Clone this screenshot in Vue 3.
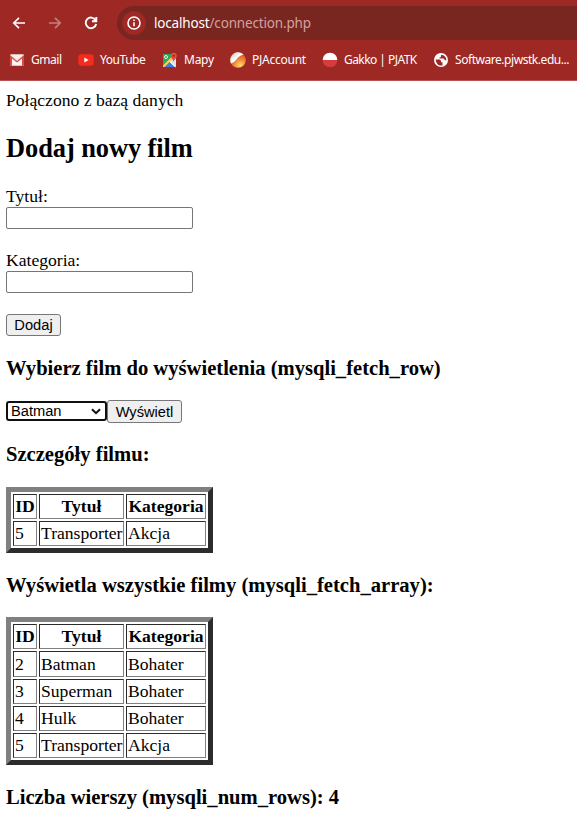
<script setup>
import { ref } from 'vue'

const selected = ref('Batman')
const title = ref('')
const category = ref('')
const films = [
  { id: 2, title: 'Batman', category: 'Bohater' },
  { id: 3, title: 'Superman', category: 'Bohater' },
  { id: 4, title: 'Hulk', category: 'Bohater' },
  { id: 5, title: 'Transporter', category: 'Akcja' }
]
const details = films.filter((f) => f.id === 5)
</script>

<template>
  <div class="window">
    <header class="chrome">
      <div class="toolbar">
        <svg class="nav" viewBox="0 0 16 16"><path d="M14 8H3M8 2.8 2.8 8 8 13.2" /></svg>
        <svg class="nav forward" viewBox="0 0 16 16"><path d="M2 8h11M8 2.8 13.2 8 8 13.2" /></svg>
        <svg class="nav reload" viewBox="0 0 16 16"><path d="M12.6 5.2A5.3 5.3 0 1 0 13.2 9M13.3 2v4.2H9" /></svg>
        <div class="address">
          <span class="info">
            <svg viewBox="0 0 14 14"><circle cx="7" cy="7" r="6" /><path d="M7 6.3v4M7 3.6v1.5" /></svg>
          </span>
          <span class="url"><b>localhost</b>/connection.php</span>
        </div>
      </div>
      <nav class="bookmarks">
        <a class="mark gmail">
          <svg viewBox="0 0 16 16">
            <path d="M1 2.500h14v11H1z" fill="#e8e5e3" />
            <path d="M3 13.500V6l5 4 5-4v7.500z" fill="#f8f7f6" />
            <path d="M1 13.500V3L8 9l7-6v10.500h-2V6.500L8 10.500 3 6.500v7z" fill="#dc4a40" />
            <path d="M2 2.500h12L8 7.700z" fill="#f3f1ee" />
          </svg>
          <span>Gmail</span>
        </a>
        <a class="mark youtube">
          <svg viewBox="0 0 16 16"><rect x=".3" y="2.300" width="15.400" height="11.400" rx="3" fill="#f52b1c" /><path d="M6.300 5.400v5.200L10.700 8z" fill="#fff" /></svg>
          <span>YouTube</span>
        </a>
        <a class="mark maps">
          <svg viewBox="0 0 16 16">
            <rect x="1" y="2" width="13" height="13" rx="1" fill="#dce5e8" />
            <path d="M1 2h9v3L1 14z" fill="#37a55b" />
            <path d="M2 15l5.500-5.500L13 15z" fill="#3f7ee8" />
            <path d="M1 13.500 11 3.500l1.500 1.500L2.500 15H1z" fill="#f7cd47" />
            <path d="M7.500 9.500 13.500 15" stroke="#fff" stroke-width="1" />
            <circle cx="4" cy="5" r="1.500" fill="none" stroke="#e5f4e8" />
            <path d="M11.700 10C11.300 7.500 8.800 6.500 8.800 3.800a3 3 0 0 1 6 0c0 2.700-2.700 3.700-3.100 6.200z" fill="#e34b3d" />
            <circle cx="11.800" cy="3.800" r="1" fill="#892b23" />
          </svg>
          <span>Mapy</span>
        </a>
        <a class="mark account">
          <svg viewBox="0 0 16 16">
            <defs>
              <radialGradient id="orb" cx=".65" cy=".85" r=".7"><stop offset="0" stop-color="#ffe16b" /><stop offset=".5" stop-color="#f3903c" /><stop offset="1" stop-color="#d85a25" /></radialGradient>
              <linearGradient id="shine" x2="1" y2="1"><stop stop-color="#b9c5c8" /><stop offset=".5" stop-color="#fff" /></linearGradient>
            </defs>
            <circle cx="8" cy="8" r="7.800" fill="url(#orb)" />
            <path d="M1 11.400A7.800 7.800 0 0 1 13.500 2.500Q8 4 6 8q-2 2.500-5 3.400z" fill="url(#shine)" />
          </svg>
          <span>PJAccount</span>
        </a>
        <a class="mark gakko">
          <svg viewBox="0 0 16 16"><circle cx="8" cy="8" r="7.300" fill="#d63b3d" /><path d="M.7 8a7.300 7.300 0 0 1 14.600 0z" fill="#fff" /></svg>
          <span>Gakko | PJATK</span>
        </a>
        <a class="mark software">
          <svg viewBox="0 0 16 16">
            <circle cx="8" cy="8" r="7" fill="#fff" />
            <path d="M2.700 7.500h3.600q1.700 0 1.700 1.700v1h1.500v3.200c-3.400 1-6.500-1.500-6.800-5.900zM8 2.700v1.700q0 1-1.500 1v1.200h4q1.100 0 1.100 1.700h1.800C13.300 5 11.500 2.900 8 2.700z" fill="#9d2824" />
          </svg>
          <span>Software.pjwstk.edu...</span>
        </a>
      </nav>
    </header>

    <main class="page">
      <p class="status">Połączono z bazą danych</p>
      <h2>Dodaj nowy film</h2>
      <form @submit.prevent>
        <label for="title">Tytuł:</label>
        <input id="title" v-model="title" type="text" />
        <label for="category" class="second">Kategoria:</label>
        <input id="category" v-model="category" type="text" />
        <button class="add">Dodaj</button>
      </form>
      <h3 class="choose">Wybierz film do wyświetlenia (mysqli_fetch_row)</h3>
      <form class="picker" @submit.prevent>
        <div class="select">
          <select v-model="selected">
            <option v-for="film in films" :key="film.id">{{ film.title }}</option>
          </select>
          <svg viewBox="0 0 10 7"><path d="M1 1.200 5 5.200 9 1.200" /></svg>
        </div>
        <button class="show">Wyświetl</button>
      </form>
      <h3 class="detail">Szczegóły filmu:</h3>
      <table class="one">
        <thead><tr><th class="id">ID</th><th class="name">Tytuł</th><th class="kind">Kategoria</th></tr></thead>
        <tbody><tr v-for="film in details" :key="film.id"><td>{{ film.id }}</td><td>{{ film.title }}</td><td>{{ film.category }}</td></tr></tbody>
      </table>
      <h3 class="all">Wyświetla wszystkie filmy (mysqli_fetch_array):</h3>
      <table class="many">
        <thead><tr><th class="id">ID</th><th class="name">Tytuł</th><th class="kind">Kategoria</th></tr></thead>
        <tbody><tr v-for="film in films" :key="film.id"><td>{{ film.id }}</td><td>{{ film.title }}</td><td>{{ film.category }}</td></tr></tbody>
      </table>
      <h3 class="count">Liczba wierszy (mysqli_num_rows): {{ films.length }}</h3>
    </main>
  </div>
</template>

<style>
body { margin: 0; background: #fff; }
</style>

<style scoped>
* { box-sizing: border-box; }
.window { width: 577px; height: 838px; overflow: hidden; background: #fff; }
.chrome { height: 81px; background: #9d2824; border-bottom: 1px solid #b3524e; color: #fff; font-family: "Noto Sans", sans-serif; }
.toolbar { display: flex; align-items: center; height: 46px; padding-left: 11px; }
.nav { width: 16px; height: 16px; margin-right: 20px; flex: none; fill: none; stroke: #fff; stroke-width: 1.7; }
.forward { opacity: .4; }
.reload { margin-right: 18px; stroke-width: 1.9; }
.address { display: flex; align-items: center; flex: 1; height: 34px; padding-left: 5px; background: #792520; border-radius: 17px 0 0 17px; }
.info { display: flex; align-items: center; justify-content: center; width: 24px; height: 24px; border-radius: 50%; background: #9d2824; }
.info svg { width: 14px; height: 14px; fill: none; stroke: #fff; stroke-width: 1.6; }
.url { margin-left: 8px; font-size: 13.5px; line-height: 20px; letter-spacing: -.17px; color: #d3a19e; white-space: nowrap; }
.url b { font-weight: 400; color: #fff; }
.bookmarks { display: flex; height: 28px; padding-left: 9px; }
.mark { display: flex; align-items: center; flex: none; gap: 6px; font-size: 12px; line-height: 16px; letter-spacing: -.45px; white-space: nowrap; }
.mark svg { width: 16px; height: 16px; flex: none; }
.gmail { width: 69px; }
.youtube { width: 84px; }
.maps { width: 68px; letter-spacing: -.25px; }
.account { width: 92px; letter-spacing: -.25px; }
.gakko { width: 111px; letter-spacing: -.55px; }
.page { padding: 9px 6px 0; font: 17.6px/20px "Liberation Serif", serif; color: #000; }
.status { margin: 0; }
h2 { margin: 23px 0; font-size: 26.4px; line-height: 30px; letter-spacing: -.06px; }
h3 { margin: 0; font-size: 20.6px; line-height: 24px; white-space: nowrap; }
label { display: block; height: 21px; }
.second { margin-top: 21px; }
input { display: block; width: 187px; height: 22px; margin: 0; padding: 1px 2px; border: 1px solid #767676; border-radius: 2px; background: #fff; font: 14.667px "Liberation Sans", sans-serif; }
button { display: block; margin: 0; padding: 0; border: 1px solid #767676; border-radius: 3px; background: #efefef; color: #000; font: 14.667px/18px "Liberation Sans", sans-serif; }
.add { width: 55px; height: 22px; margin-top: 21px; }
.choose { margin-top: 20px; }
.picker { display: flex; height: 23px; margin-top: 20px; }
.select { display: grid; align-items: center; width: 101px; height: 20px; margin-top: 1px; }
.select > * { grid-area: 1 / 1; }
select { appearance: none; width: 101px; height: 20px; margin: 0; padding: 0 0 0 3px; border: 2px solid #101010; border-radius: 3px; outline: none; background: #fff; color: #000; font: 14.667px/16px "Liberation Sans", sans-serif; }
.select svg { width: 10px; height: 7px; justify-self: end; margin-right: 6px; fill: none; stroke: #101010; stroke-width: 2; pointer-events: none; }
.show { width: 75px; height: 23px; }
.detail { margin-top: 19px; }
table { width: 207px; table-layout: fixed; border: 5px solid; border-color: #808080 #2c2c2c #2c2c2c #808080; border-collapse: separate; border-spacing: 2px; }
th, td { height: 25px; padding: 0 1px; border: 1px solid; border-color: #2c2c2c #808080 #808080 #2c2c2c; line-height: 23px; white-space: nowrap; text-align: left; }
th { text-align: center; }
.id { width: 24px; }
.name { width: 85px; }
.kind { width: 80px; }
.one { margin-top: 21px; }
.many { margin-top: 20px; }
.many tbody tr:first-child td { height: 26px; }
.all { margin-top: 20px; }
.count { margin-top: 20px; }
</style>
